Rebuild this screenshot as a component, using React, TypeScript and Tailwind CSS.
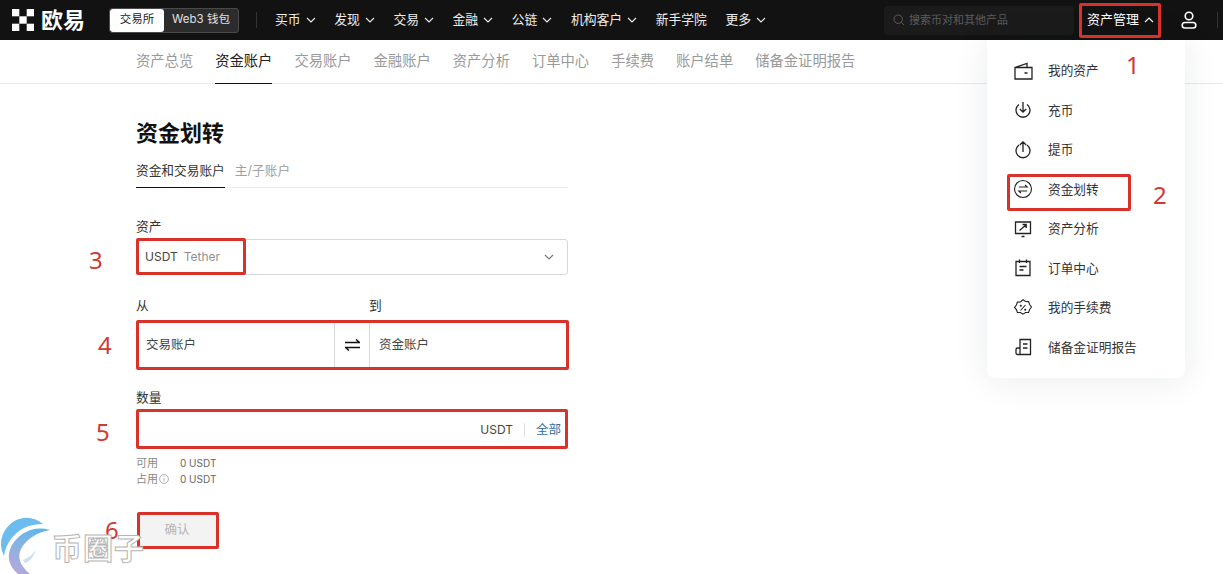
import React from 'react';

const Chevron = ({ up = false }: { up?: boolean }) => (
  <svg width="10" height="6" viewBox="0 0 10 6" fill="none" stroke="currentColor" strokeWidth="1.1" className="ml-[5px]">
    <path d={up ? 'M1 5l4-4 4 4' : 'M1 1l4 4 4-4'} />
  </svg>
);

const navItems = [
  { label: '买币', arrow: true },
  { label: '发现', arrow: true },
  { label: '交易', arrow: true },
  { label: '金融', arrow: true },
  { label: '公链', arrow: true },
  { label: '机构客户', arrow: true },
  { label: '新手学院', arrow: false },
  { label: '更多', arrow: true },
];

const subTabs = ['资产总览', '资金账户', '交易账户', '金融账户', '资产分析', '订单中心', '手续费', '账户结单', '储备金证明报告'];

const iconProps = {
  width: 20,
  height: 20,
  viewBox: '0 0 20 20',
  fill: 'none',
  stroke: '#222',
  strokeWidth: 1.3,
};

const menuItems: { label: string; icon: React.ReactNode }[] = [
  {
    label: '我的资产',
    icon: (
      <svg {...iconProps}>
        <path d="M2 6.5v11.5h17V6.5zM2 6.5L14 2.5v4M11.5 12h3" />
      </svg>
    ),
  },
  {
    label: '充币',
    icon: (
      <svg {...iconProps}>
        <path d="M6 4.5a7 7 0 1 0 8 0M10 2v10M6.8 9l3.2 3.2L13.2 9" />
      </svg>
    ),
  },
  {
    label: '提币',
    icon: (
      <svg {...iconProps}>
        <path d="M6 5a7 7 0 1 0 8 0M10 12V2M6.8 5L10 1.8 13.2 5" />
      </svg>
    ),
  },
  {
    label: '资金划转',
    icon: (
      <svg {...iconProps} strokeWidth={1.1}>
        <circle cx="10" cy="10" r="8.5" />
        <path d="M5.8 8h8.4l-2.2-2M14.2 12H5.8l2.2 2" />
      </svg>
    ),
  },
  {
    label: '资产分析',
    icon: (
      <svg {...iconProps}>
        <path d="M2.5 3h15v11.5h-15zM6.5 11.5l6.5-5.5M9.5 5.5H13.2v3.5M8.5 17.5h3" />
      </svg>
    ),
  },
  {
    label: '订单中心',
    icon: (
      <svg {...iconProps}>
        <path d="M3 3.5h14v14H3zM6.5 1.5v3.5M13.5 1.5v3.5M6.5 8.5h7M6.5 12h4" />
      </svg>
    ),
  },
  {
    label: '我的手续费',
    icon: (
      <svg {...iconProps} strokeWidth={1.1}>
        <path d="M10 1.8l2.6 1.7 3 .1 1 2.9 1.9 2.5-1.9 2.5-1 2.9-3 .1-2.6 1.7-2.6-1.7-3-.1-1-2.9L1.5 9.5l1.9-2.5 1-2.9 3-.1zM7.5 12.5l5-5.5" />
        <circle cx="7.8" cy="7.8" r=".5" />
        <circle cx="12.2" cy="11.8" r=".5" />
      </svg>
    ),
  },
  {
    label: '储备金证明报告',
    icon: (
      <svg {...iconProps}>
        <path d="M7 11V2.5h10.5v15H4.5A1.5 1.5 0 0 1 3 16v-3.5A1.5 1.5 0 0 1 4.5 11H7v6.5M10 7h4.5M10 11h4.5" />
      </svg>
    ),
  },
];

const marks = [
  'left-[1079px] top-[3px] w-[82px] h-[35px]',
  'left-[1007px] top-[174px] w-[124px] h-[37px]',
  'left-[136px] top-[238px] w-[110px] h-[37px]',
  'left-[136px] top-[320px] w-[433px] h-[50px]',
  'left-[136px] top-[409px] w-[432px] h-[40px]',
  'left-[137px] top-[512px] w-[82px] h-[37px]',
];

const numbers = [
  { n: '1', pos: 'left-[1126px] top-[50px]' },
  { n: '2', pos: 'left-[1153px] top-[180px]' },
  { n: '3', pos: 'left-[89px] top-[245px]' },
  { n: '4', pos: 'left-[98px] top-[330px]' },
  { n: '5', pos: 'left-[96px] top-[417px]' },
  { n: '6', pos: 'left-[105px] top-[515px]' },
];

export default function App() {
  return (
    <div className="relative h-[574px] w-[1223px] overflow-hidden bg-white font-['Inter','Noto_Sans_CJK_SC',sans-serif] text-[#1f1f1f]">
      {/* top bar */}
      <header className="flex h-10 items-center bg-[#121212] pl-3 text-white">
        <svg width="22" height="22" viewBox="0 0 22 22" fill="#fff" className="shrink-0">
          <rect x="0" y="0" width="7.3" height="7.3" />
          <rect x="14.7" y="0" width="7.3" height="7.3" />
          <rect x="7.3" y="7.3" width="7.4" height="7.4" />
          <rect x="0" y="14.7" width="7.3" height="7.3" />
          <rect x="14.7" y="14.7" width="7.3" height="7.3" />
        </svg>
        <span className="ml-[7px] w-[44px] whitespace-nowrap text-[22px] leading-none font-bold">欧易</span>
        <div className="ml-6 flex h-[25px] w-[130px] overflow-hidden rounded-[3px] border border-[#4a4a4a] bg-[#2c2c2c] text-[11.5px]">
          <div className="flex w-[54px] items-center justify-center rounded-[3px] bg-white text-[#222]">交易所</div>
          <div className="flex flex-1 items-center justify-center text-[#e0e0e0]">Web3 钱包</div>
        </div>
        <div className="mr-[18px] ml-[17px] h-4 w-px bg-[#333]" />
        <nav className="flex items-center gap-[18.6px] text-[12.8px]">
          {navItems.map((item) => (
            <div key={item.label} className="flex items-center whitespace-nowrap text-[#ededed]">
              {item.label}
              {item.arrow && <Chevron />}
            </div>
          ))}
        </nav>
        <div className="ml-[118px] flex h-[29px] w-[190px] items-center rounded-[3px] bg-[#1b1b1b] pl-[9px] text-[11px] text-[#5c5c5c]">
          <svg width="12" height="12" viewBox="0 0 12 12" fill="none" stroke="#5c5c5c" strokeWidth="1" className="mr-[4px]">
            <circle cx="5.2" cy="5.2" r="4.2" />
            <path d="M8.3 8.3l2.7 2.7" />
          </svg>
          搜索币对和其他产品
        </div>
        <div className="ml-[13px] flex items-center whitespace-nowrap text-[13px] text-white">
          资产管理
          <Chevron up />
        </div>
        <svg width="16" height="18" viewBox="0 0 16 18" fill="none" stroke="#fff" strokeWidth="1.6" className="ml-[27px]">
          <circle cx="8" cy="5" r="3.8" />
          <rect x="1.2" y="11.5" width="13.6" height="5.5" rx="2.7" />
        </svg>
        <div className="ml-[20px] h-4 w-px bg-[#333]" />
      </header>

      {/* sub tabs */}
      <div className="flex h-11 gap-[22px] border-b border-[#e9e9e9] pl-[136px] text-[14.3px] text-[#9a9a9a]">
        {subTabs.map((tab) => (
          <div
            key={tab}
            className={
              tab === '资金账户'
                ? 'flex -mb-px items-center border-b border-[#111] pb-[2px] whitespace-nowrap text-[#222]'
                : 'flex items-center pb-[2px] whitespace-nowrap'
            }
          >
            {tab}
          </div>
        ))}
      </div>

      {/* transfer form */}
      <main className="ml-[136px] w-[432px]">
        <h1 className="mt-[34px] text-[22px] leading-[30px] font-bold text-[#111]">资金划转</h1>
        <div className="mt-[11px] flex h-[29px] gap-[10px] border-b border-[#ececec] text-[12.7px]">
          <div className="-mb-px flex items-center border-b border-[#111] pb-[4px] text-[#333]">资金和交易账户</div>
          <div className="flex items-center pb-[4px] text-[#a0a0a0]">主/子账户</div>
        </div>

        <div className="mt-[30px] text-[12.7px] leading-[18px] text-[#333]">资产</div>
        <div className="mt-[3px] flex h-[36px] items-center justify-between rounded-[3px] border border-[#d8d8d8] pr-[13px] pl-[8px] text-[12px] text-[#444]">
          <span>
            USDT<span className="ml-[6px] text-[#8f8f8f]">Tether</span>
          </span>
          <svg width="10" height="6" viewBox="0 0 10 6" fill="none" stroke="#777" strokeWidth="1.1">
            <path d="M1 1l4 4 4-4" />
          </svg>
        </div>

        <div className="mt-[22px] flex text-[12.7px] leading-[18px] text-[#333]">
          <span className="w-[233px]">从</span>
          <span>到</span>
        </div>
        <div className="mt-[6px] flex h-[48px] items-center rounded-[3px] border border-[#d8d8d8] text-[12.5px] text-[#444]">
          <div className="flex h-full w-[197px] items-center pl-[9px]">交易账户</div>
          <div className="flex h-full w-[36px] items-center justify-center border-x border-[#d8d8d8]">
            <svg width="15" height="12" viewBox="0 0 15 12" fill="none" stroke="#111" strokeWidth="1.5">
              <path d="M0 3.5h14.5L11 .5M15 8.5H.5l3.5 3" />
            </svg>
          </div>
          <div className="pl-[9px]">资金账户</div>
        </div>

        <div className="mt-[20px] text-[12.7px] leading-[18px] text-[#333]">数量</div>
        <div className="mt-[3px] flex h-[38px] items-center justify-end rounded-[3px] border border-[#d8d8d8] pt-[2px] pr-[6px] text-[12.5px]">
          <span className="text-[12px] text-[#444]">USDT</span>
          <span className="mx-[11px] h-[14px] w-px bg-[#dedede]" />
          <span className="text-[#2f6ea5]">全部</span>
        </div>

        <div className="mt-[7px] flex text-[11px] leading-4 text-[#8a8a8a]">
          <span className="w-[44px]">可用</span>
          <span className="text-[10px] text-[#666]">0 USDT</span>
        </div>
        <div className="flex text-[11px] leading-4 text-[#8a8a8a]">
          <span className="flex w-[44px] items-center">
            占用
            <svg width="10" height="10" viewBox="0 0 10 10" fill="none" stroke="#8a8a8a" strokeWidth=".7" className="ml-[1px]">
              <circle cx="5" cy="5" r="4.4" />
              <path d="M5 4.4v3M5 2.4v1" />
            </svg>
          </span>
          <span className="text-[10px] text-[#666]">0 USDT</span>
        </div>

        <button className="mt-[27px] ml-[2px] flex h-[33px] w-[78px] items-center justify-center rounded-[3px] bg-[#f3f3f3] text-[12.5px] text-[#b5b5b5]">
          确认
        </button>
      </main>

      {/* asset dropdown */}
      <div className="absolute top-10 left-[987px] h-[338px] w-[198px] rounded-b-lg bg-white pt-[11px] shadow-[0_2px_36px_rgba(20,30,50,0.09)]">
        {menuItems.map((item) => (
          <div key={item.label} className="flex h-[39.5px] items-center pl-[26px] text-[12.7px] whitespace-nowrap text-[#333]">
            {item.icon}
            <span className="ml-[15px]">{item.label}</span>
          </div>
        ))}
      </div>

      {/* red annotations */}
      {marks.map((pos) => (
        <div key={pos} className={`absolute rounded-[2px] border-[3px] border-[#d9322a] ${pos}`} />
      ))}
      {numbers.map(({ n, pos }) => (
        <span key={n} className={`absolute font-['Noto_Sans',sans-serif] text-[24px] leading-[30px] text-[#cf3a33] ${pos}`}>
          {n}
        </span>
      ))}

      {/* watermark */}
      <svg width="54" height="64" viewBox="0 0 54 64" className="absolute top-[510px] left-0">
        <defs>
          <linearGradient id="wm" x1="0.8" y1="0" x2="0.3" y2="1">
            <stop offset="0" stopColor="#58b6ee" />
            <stop offset="0.5" stopColor="#86b4e2" />
            <stop offset="1" stopColor="#b0a8dc" />
          </linearGradient>
        </defs>
        <path d="M43 14C30 3 12 7 4 22C0 30 0 38 4 46C6 33 14 23 24 18C30 15 37 14 43 14z" fill="#6cbdee" />
        <path d="M50 20C34 15 18 23 11 37C7 45 8 56 18 64L30 64C20 56 17 47 21 39C27 28 38 22 50 20z" fill="url(#wm)" />
        <path d="M36 40C32 45 28 48 23 50C24 52 25 53 26 53C30 51 34 46 36 40z" fill="#cfdff0" />
      </svg>
      <span className="absolute top-[530px] left-[52px] text-[30px] leading-[36px] font-bold tracking-[1px] whitespace-nowrap text-white [-webkit-text-stroke:1px_#b5b5b5]">
        币圈子
      </span>
    </div>
  );
}
